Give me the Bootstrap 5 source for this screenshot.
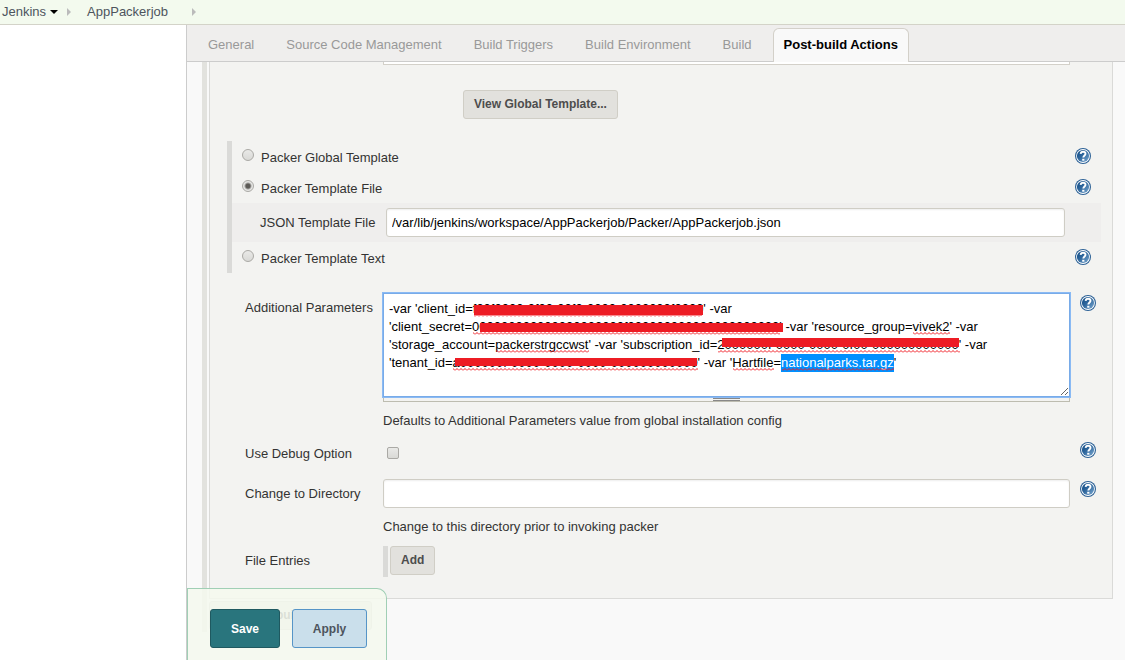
<!DOCTYPE html>
<html lang="en">
<head>
<meta charset="utf-8">
<meta name="viewport" content="width=device-width, initial-scale=1">
<title>AppPackerjob Config [Jenkins]</title>
<link href="https://cdn.jsdelivr.net/npm/bootstrap@5.3.0/dist/css/bootstrap.min.css" rel="stylesheet">
<style>
  body { font: 13px/18px "Liberation Sans", Arial, sans-serif; color: #333; background: #fff; }
  a { color: inherit; text-decoration: none; }
  .crumbs { height: 25px; background: #f3faee; border-bottom: 1px solid #d3d3c8; color: #4d545d; padding-left: 2px; }
  .side-space { width: 186px; flex: none; }
  .config { border-left: 1px solid #ccc; background: #f9f9f9; min-width: 0; }
  .config-tabs { background: #efeeed; border-bottom: 1px solid #ccc; padding: 3px 10px 0; gap: 10px; flex-wrap: nowrap; }
  .config-tabs .nav-link { color: #999; padding: 7px 10px 8px; border: 1px solid transparent; border-bottom: 0; border-radius: 6px 6px 0 0; white-space: nowrap; margin-bottom: -1px; line-height: 18px; }
  .config-tabs .nav-link.active { color: #000; font-weight: bold; background: #f9f9f9; border-color: #d3d0c9; }
  .outer { padding: 0 12px 28px 15px; }
  .drag-bar { border-left: 5px solid #e2e2de; padding: 0 0 2px 2px; }
  .panel { background: #f3f3f1; border: 1px solid #dadad8; border-top: 0; padding: 0 0 21px 17px; margin-bottom: 2px; }
  .cut-field { display: block; height: 3px; margin: 0 42px 25px 156px; border: 1px solid #d3d0c9; border-top: 0; background: #fff; flex: none; }
  .btn-j { display: block; font-size: 12px; font-weight: bold; line-height: 17px; color: #4d4d4d; background: #e2e1dd; border: 1px solid #d0cec6; border-radius: 3px; padding: 5px 10px; }
  .view-btn { margin-left: 236px; }
  .choices { border-left: 5px solid #dadad8; margin: 22px 11px 20px 0; }
  .choice { height: 31px; padding: 0 10px; }
  .choice label { padding-top: 2px; margin-left: 7px; }
  .choice .help { margin-bottom: 2px; }
  .tick { appearance: none; width: 12px; height: 12px; margin: 0; border: 1px solid #aaa9a5; background: linear-gradient(#e9e9e7, #d9d9d6); flex: none; }
  .choice .tick { border-radius: 50%; margin-bottom: 3px; }
  .choice .tick:checked { background: radial-gradient(circle, #5c5a56 0 2px, #e6e6e4 4px); }
  .tick.square { border-radius: 2px; margin: 0 0 2px 4px; display: block; }
  .json-row { background: #efeeed; height: 39px; padding: 0 36px 0 28px; }
  .json-row label { width: 126px; }
  .field { height: 29px; min-width: 0; flex: 1; width: 100%; border: 1px solid #cfcdc5; border-radius: 3px; padding: 0 5px; box-shadow: inset 0 1px 2px #eee; background: #fff; color: #000; outline: 0; }
  .line { padding-left: 18px; }
  .line .caption { width: 138px; flex: none; padding-top: 6px; }
  .line .value { flex: 1; min-width: 0; }
  .line .aid { width: 42px; padding: 2px 0 0 10px; flex: none; }
  .line p { margin: 0; padding-top: 10px; }
  .debug-line { padding-top: 12px; }
  .debug-line .caption { padding: 0; }
  .debug-line .aid { padding: 0 0 8px 10px; }
  .dir-line { padding-top: 13px; }
  .files-line { padding-top: 10px; }
  .help { display: block; width: 16px; height: 16px; }
  .help svg { display: block; }
  .params { display: block; width: 100%; height: 104px; border: 1px solid #78abe8; box-shadow: 0 0 0 1px #8abaf4; outline: 0; color: #000; padding: 6px 5px; line-height: 18px; white-space: pre; overflow: hidden; resize: both; }
  .params::selection { background: #0090ff; color: #fff; }
  .overlay { position: absolute; inset: 0; width: 100%; height: 100%; pointer-events: none; }
  .grip { height: 5px; border: 1px solid #bdbcb0; border-top: 0; }
  .grip i { display: block; width: 27px; height: 3px; margin-top: 1px; border: solid #888; border-width: 1px 0; }
  .add-wrap { border-left: 5px solid #dadad8; padding: 0 0 2px 2px; }
  .save-bar { position: absolute; left: 0; bottom: 0; width: 200px; height: 72px; padding: 20px 0 0 22px; gap: 12px; border: 1px solid #a0cfb5; border-bottom: 0; border-radius: 0 10px 0 0; background: rgba(245, 249, 239, .85); }
  .save-bar .btn { font-size: 12px; font-weight: bold; height: 39px; border-radius: 3px; padding: 0; }
  .save-btn, .save-btn:hover { width: 70px; background: #29757d; border-color: #1f5960; color: #fff; }
  .apply-btn, .apply-btn:hover { width: 75px; background: #cadfeb; border-color: #5695c7; color: #4d545d; }
</style>
</head>
<body class="d-flex flex-column min-vh-100">
<svg width="0" height="0" class="position-absolute" aria-hidden="true">
  <defs>
    <linearGradient id="blue" x2="1" y2="1"><stop stop-color="#0c4882"/><stop offset=".45" stop-color="#2f679d"/><stop offset="1" stop-color="#7eabd3"/></linearGradient>
    <symbol id="help" viewBox="0 0 16 16">
      <circle cx="8" cy="8" r="8" fill="#2c6196"/><circle cx="8" cy="8" r="6.9" fill="#fff"/><circle cx="8" cy="8" r="6.1" fill="url(#blue)"/>
      <path d="M5.6 5.9C5.8 4.5 6.7 3.8 8 3.8c1.500 0 2.500.8 2.500 2 0 1.600-2.200 1.700-2.200 3.800" fill="none" stroke="#fff" stroke-width="1.900"/><path d="M7.200 10.800h2.200v1.900H7.200z" fill="#fff"/>
    </symbol>
    <pattern id="wave" width="4" height="3" patternUnits="userSpaceOnUse"><path d="M0 2.500L2 .5L4 2.500" fill="none" stroke="#f01820"/></pattern>
  </defs>
</svg>

<nav class="crumbs d-flex align-items-center" aria-label="Breadcrumb">
  <a href="#jenkins">Jenkins</a>
  <svg class="ms-1" width="8" height="4" aria-hidden="true"><path d="M0 0h8L4 4z" fill="#000"/></svg>
  <svg width="5" height="8" class="ms-2 me-3" aria-hidden="true"><path d="M1 0v8l4-4z" fill="#bbb"/></svg>
  <a href="#job">AppPackerjob</a>
  <svg width="5" height="8" class="ms-4" aria-hidden="true"><path d="M0 0v8l4-4z" fill="#bbb"/></svg>
</nav>

<div class="d-flex flex-grow-1">
  <div class="side-space"></div>
  <main class="config flex-grow-1 position-relative">
    <nav class="config-tabs nav" aria-label="Sections">
      <a class="nav-link" href="#general">General</a>
      <a class="nav-link" href="#scm">Source Code Management</a>
      <a class="nav-link" href="#triggers">Build Triggers</a>
      <a class="nav-link" href="#environment">Build Environment</a>
      <a class="nav-link" href="#build">Build</a>
      <a class="nav-link active" href="#post" aria-current="true">Post-build Actions</a>
    </nav>

    <form class="outer" onsubmit="return false">
      <div class="drag-bar">
        <section class="panel">
          <div class="cut-field"></div>
          <button type="button" class="btn btn-j view-btn">View Global Template...</button>

          <div class="choices">
            <div class="choice d-flex align-items-center">
              <input class="tick" type="radio" name="mode" id="m1"><label for="m1">Packer Global Template</label>
              <a class="help ms-auto" href="#h1" aria-label="Help"><svg width="16" height="16"><use href="#help"/></svg></a>
            </div>
            <div class="choice d-flex align-items-center">
              <input class="tick" type="radio" name="mode" id="m2" checked><label for="m2">Packer Template File</label>
              <a class="help ms-auto" href="#h2" aria-label="Help"><svg width="16" height="16"><use href="#help"/></svg></a>
            </div>
            <div class="json-row d-flex align-items-center">
              <label for="json">JSON Template File</label>
              <input class="field" id="json" type="text" value="/var/lib/jenkins/workspace/AppPackerjob/Packer/AppPackerjob.json">
            </div>
            <div class="choice d-flex align-items-center">
              <input class="tick" type="radio" name="mode" id="m3"><label for="m3">Packer Template Text</label>
              <a class="help ms-auto" href="#h3" aria-label="Help"><svg width="16" height="16"><use href="#help"/></svg></a>
            </div>
          </div>

          <div class="line d-flex">
            <label class="caption" for="params">Additional Parameters</label>
            <div class="value">
              <div class="position-relative">
                <textarea class="params" id="params" spellcheck="false">-var 'client_id=f00f0000-0f00-00f0-0000-0000000f0000' -var
'client_secret=000000000000000000000f000000000000000000000' -var 'resource_group=vivek2' -var
'storage_account=packerstrgccwst' -var 'subscription_id=2000000f-0000-0000-0f00-000000000000' -var
'tenant_id=a000000f-0000-0000-0000-000000000000' -var 'Hartfile=nationalparks.tar.gz'</textarea>
                <svg class="overlay" aria-hidden="true">
                  <g fill="url(#wave)">
                    <rect x="91" y="21" width="228" height="3"/>
                    <rect x="90" y="39" width="307" height="3"/>
                    <rect x="530" y="39" width="37" height="3"/>
                    <rect x="113" y="57" width="93" height="3"/>
                    <rect x="335" y="57" width="242" height="3"/>
                    <rect x="70" y="75" width="245" height="3"/>
                    <rect x="350" y="75" width="41" height="3"/>
                    <rect x="399" y="75" width="112" height="3"/>
                  </g>
                  <g fill="#ed1c24">
                    <rect x="91" y="12" width="229" height="10"/>
                    <rect x="97" y="30" width="303" height="9"/>
                    <rect x="339" y="45" width="237" height="9"/>
                    <rect x="72" y="65" width="242" height="8"/>
                  </g>
                </svg>
              </div>
              <div class="grip d-flex justify-content-center"><i></i></div>
              <p>Defaults to Additional Parameters value from global installation config</p>
            </div>
            <div class="aid"><a class="help" href="#h4" aria-label="Help"><svg width="16" height="16"><use href="#help"/></svg></a></div>
          </div>

          <div class="line debug-line d-flex align-items-center">
            <label class="caption" for="debug">Use Debug Option</label>
            <div class="value"><input class="tick square" type="checkbox" id="debug"></div>
            <div class="aid"><a class="help" href="#h5" aria-label="Help"><svg width="16" height="16"><use href="#help"/></svg></a></div>
          </div>

          <div class="line dir-line d-flex">
            <label class="caption" for="dir">Change to Directory</label>
            <div class="value">
              <input class="field d-block" id="dir" type="text">
              <p>Change to this directory prior to invoking packer</p>
            </div>
            <div class="aid"><a class="help" href="#h6" aria-label="Help"><svg width="16" height="16"><use href="#help"/></svg></a></div>
          </div>

          <div class="line files-line d-flex">
            <div class="caption">File Entries</div>
            <div class="add-wrap"><button type="button" class="btn btn-j">Add</button></div>
          </div>
        </section>
        <button type="button" class="btn btn-j">Add post-build action <span class="ms-2">▾</span></button>
      </div>
      <div class="save-bar d-flex">
        <button type="submit" class="btn save-btn">Save</button>
        <button type="button" class="btn apply-btn">Apply</button>
      </div>
    </form>
  </main>
</div>
<script src="https://cdn.jsdelivr.net/npm/bootstrap@5.3.0/dist/js/bootstrap.bundle.min.js"></script>
<script>
  // Open with the Hartfile value selected, ready to be replaced
  const params = document.getElementById('params');
  const start = params.value.indexOf('nationalparks');
  params.focus({ preventScroll: true });
  params.setSelectionRange(start, params.value.length - 1);
</script>
</body>
</html>
